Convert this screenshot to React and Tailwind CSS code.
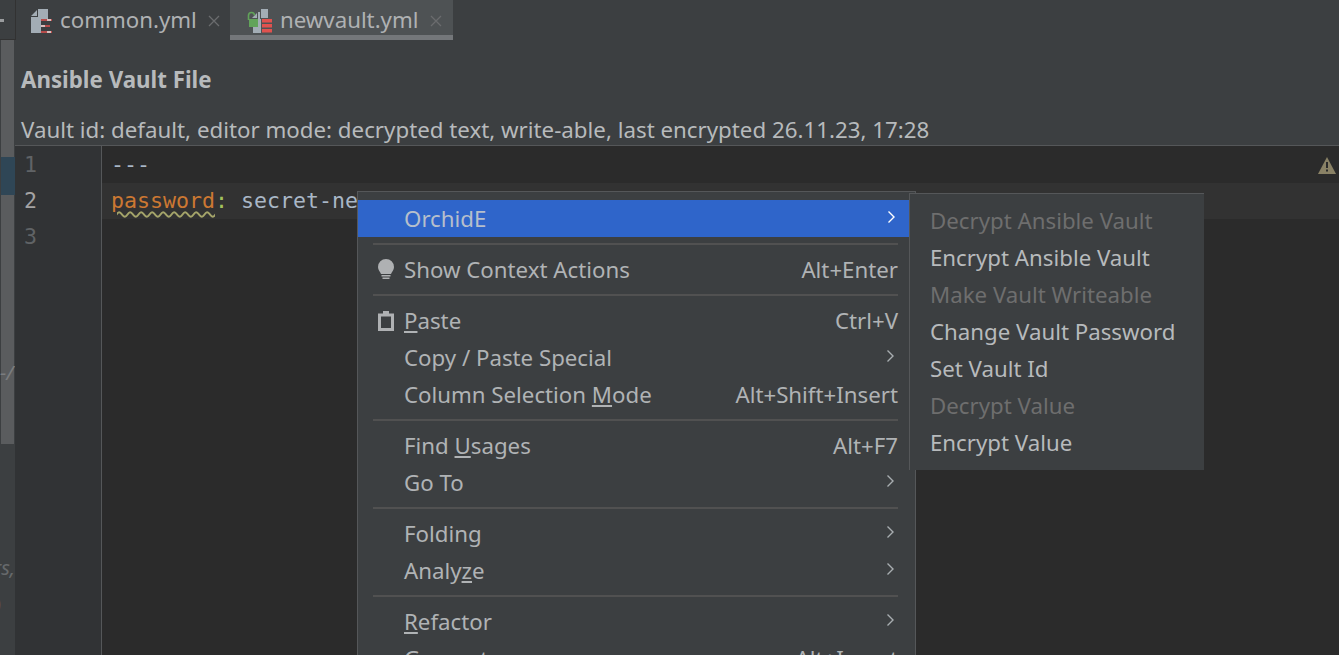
const menuGroups = [
  [{ label: 'OrchidE', arrow: true, active: true }],
  [{ label: 'Show Context Actions', shortcut: 'Alt+Enter', icon: 'bulb' }],
  [
    { label: <><u className="underline underline-offset-2">P</u>aste</>, shortcut: 'Ctrl+V', icon: 'clipboard' },
    { label: 'Copy / Paste Special', arrow: true },
    { label: <>Column Selection <u className="underline underline-offset-2">M</u>ode</>, shortcut: 'Alt+Shift+Insert' },
  ],
  [
    { label: <>Find <u className="underline underline-offset-2">U</u>sages</>, shortcut: 'Alt+F7' },
    { label: 'Go To', arrow: true },
  ],
  [
    { label: 'Folding', arrow: true },
    { label: <>Analy<u className="underline underline-offset-2">z</u>e</>, arrow: true },
  ],
  [
    { label: <><u className="underline underline-offset-2">R</u>efactor</>, arrow: true },
    { label: 'Generate', shortcut: 'Alt+Insert' },
  ],
]

const vaultItems = [
  { label: 'Decrypt Ansible Vault', disabled: true },
  { label: 'Encrypt Ansible Vault' },
  { label: 'Make Vault Writeable', disabled: true },
  { label: 'Change Vault Password' },
  { label: 'Set Vault Id' },
  { label: 'Decrypt Value', disabled: true },
  { label: 'Encrypt Value' },
]

function Chevron({ color = '#a8adb0' }) {
  return (
    <svg width="9" height="14" viewBox="0 0 9 14" fill="none" className="mb-1">
      <path d="M1.5 1.5 7 7l-5.5 5.5" stroke={color} strokeWidth="1.4" />
    </svg>
  )
}

function BulbIcon() {
  return (
    <svg width="16" height="22" viewBox="0 0 16 22" fill="#afb1b3">
      <path d="M8 0a8 8 0 0 1 8 8c0 3-2 4.500-3 7H3C2 12.500 0 11 0 8a8 8 0 0 1 8-8Z" />
      <path d="M3.500 16h9v1.500h-9zM4.500 18.500h7V20h-7z" />
    </svg>
  )
}

function ClipboardIcon() {
  return (
    <svg width="16" height="20" viewBox="0 0 16 20" fill="#afb1b3">
      <path fillRule="evenodd" d="M5 0h6v2.500h5V20H0V2.500h5V0ZM3 5.500V17h10V5.500H3Z" />
    </svg>
  )
}

function CloseX() {
  return (
    <svg width="12" height="12" viewBox="0 0 12 12" className="shrink-0">
      <path d="M1 1l10 10M11 1 1 11" stroke="#6a6c6e" strokeWidth="1.300" />
    </svg>
  )
}

function YamlIcon() {
  return (
    <svg width="24" height="24" viewBox="0 0 24 24" className="shrink-0">
      <path d="M0 7 6 1v6H0ZM0 8h7V0h10v10H10v14H0V8Z" fill="#a3adb5" />
      <path d="M10 11h11M10 17h9M10 23h11" stroke="#e0524f" strokeWidth="1.600" />
      <path d="M16 11h4M10 17h4M16 23h4" stroke="#e4e4e4" strokeWidth="1.600" />
    </svg>
  )
}

function VaultIcon() {
  return (
    <svg width="26" height="24" viewBox="0 0 26 24" className="shrink-0">
      <path d="M5 9 10 4v5H5ZM5 10h6V3h2v7h1v14H6V10H5Z" fill="#a3adb5" />
      <path d="M14 0h7v9h-7z" fill="#a3adb5" />
      <path d="M15 10h10v3.500H15zM15 15h10v3.500H15zM15 20h10v3.500H15z" fill="#e0524f" />
      <path d="M1.500 11V6.500a3 3 0 0 1 6 0" fill="none" stroke="#62a35a" strokeWidth="1.600" />
      <path d="M2 10h9v8H2z" fill="#62a35a" />
    </svg>
  )
}

function Tab({ name, icon, active }) {
  return (
    <div
      className={`flex h-[40px] items-center border-b-[5px] pt-[6px] ${
        active
          ? 'w-[223px] border-[#74777a] bg-[#4e5254] pl-[17px]'
          : 'w-[214px] border-transparent pl-[15px]'
      }`}
    >
      {icon}
      <span className={`${active ? 'ml-[7px]' : 'ml-[5px]'} text-[22.250px] leading-none text-[#afb1b3]`}>{name}</span>
      <span className="ml-[11px]">
        <CloseX />
      </span>
    </div>
  )
}

function MenuRow({ item }) {
  return (
    <div
      className={`flex h-[37px] items-center pr-[17px] ${
        item.active ? 'mr-[6px] bg-[#2f65ca] text-[#b6bfcc]' : 'text-[#b0b3b5]'
      }`}
    >
      <span className="flex w-[46px] shrink-0 justify-center pl-[9px]">
        {item.icon === 'bulb' && <BulbIcon />}
        {item.icon === 'clipboard' && <ClipboardIcon />}
      </span>
      <span className="flex-1 whitespace-nowrap">{item.label}</span>
      {item.shortcut && <span className="whitespace-nowrap">{item.shortcut}</span>}
      {item.arrow && (
        <span className={item.active ? 'mr-[-4px]' : 'mr-[3px]'}>
          <Chevron color={item.active ? '#ffffff' : '#a8adb0'} />
        </span>
      )}
    </div>
  )
}

function ContextMenu() {
  return (
    <div className="absolute left-[357px] top-[191px] w-[559px] border border-[#555759] bg-[#3c3f41] pt-[8px] text-[22.250px]">
      {menuGroups.map((group, i) => (
        <div key={i}>
          {i > 0 && <div className="mx-[15px] mr-[17px] mt-[6px] mb-[6px] h-[2px] bg-[#515151]" />}
          {group.map((item, j) => (
            <MenuRow key={j} item={item} />
          ))}
        </div>
      ))}
    </div>
  )
}

function VaultSubmenu() {
  return (
    <div className="absolute left-[909px] top-[193px] w-[295px] border-t border-l border-[#555759] bg-[#3c3f41] pt-[8px] pb-[9px] pl-[20px] text-[22.250px]">
      {vaultItems.map((item) => (
        <div
          key={item.label}
          className={`flex h-[37px] items-center whitespace-nowrap ${
            item.disabled ? 'text-[#6e6e6e]' : 'text-[#b7babc]'
          }`}
        >
          {item.label}
        </div>
      ))}
    </div>
  )
}

function App() {
  return (
    <div
      className="relative flex h-[655px] w-[1339px] overflow-hidden bg-[#2b2b2b]"
      style={{ fontFamily: '"Noto Sans", sans-serif' }}
    >
      <aside className="relative flex w-[15px] shrink-0 flex-col overflow-hidden bg-[#3c3f41]">
        <div className="h-[40px] border-b border-[#323232]">
          <div className="mt-[19px] h-[3px] w-[4px] bg-[#9a9c9e]" />
        </div>
        <div className="ml-[1px] flex h-[404px] w-[13px] flex-col bg-[#5a5c5e]">
          <div className="mt-[117px] h-[38px] w-[14px] bg-[#2f4656]" />
        </div>
        <span className="absolute left-[0px] top-[358px] text-[20px] italic text-[#7b7d7f]">-/</span>
        <span className="absolute right-[0px] top-[553px] text-[20px] italic text-[#66696b]">rs,</span>
        <span className="absolute left-[-5px] top-[588px] text-[20px] text-[#6b5a43]">)</span>
      </aside>

      <main className="flex min-w-0 flex-1 flex-col">
        <div className="flex h-[40px] shrink-0 border-l border-[#323232] bg-[#3c3f41]">
          <Tab name="common.yml" icon={<YamlIcon />} />
          <Tab name="newvault.yml" icon={<VaultIcon />} active />
        </div>

        <div className="flex h-[106px] shrink-0 flex-col border-b border-[#555759] bg-[#3c3f41] pl-[6px] text-[#b7babc]">
          <div className="mt-[26px] text-[22.300px] font-bold leading-[28px]">Ansible Vault File</div>
          <div className="mt-[22px] text-[22.300px] leading-[28px]">
            Vault id: default, editor mode: decrypted text, write-able, last encrypted 26.11.23, 17:28
          </div>
        </div>

        <div
          className="flex flex-1 text-[21.600px]"
          style={{ fontFamily: '"DejaVu Sans Mono", monospace' }}
        >
          <div className="w-[87px] shrink-0 border-r border-[#555759] bg-[#313335] pl-[9px] pt-[1px] leading-[36px] text-[#606366]">
            <div>1</div>
            <div className="text-[#a4a3a3]">2</div>
            <div>3</div>
          </div>
          <div className="relative flex-1 pt-[1px] leading-[36px] text-[#a9b7c6]">
            <div className="pl-[9px]">---</div>
            <div className="bg-[#323232] pl-[9px]">
              <span className="text-[#cc7832] underline decoration-wavy decoration-[#a5a56a] decoration-[1.500px] underline-offset-[3px]">password</span>
              <span className="text-[#a5c25c]">:</span> secret-new
            </div>
            <svg width="18" height="17" viewBox="0 0 18 17" className="absolute right-[3px] top-[11px]">
              <path d="M9 0 18 17H0L9 0Z" fill="#8a8266" />
              <path d="M8 5h2v6H8zM8 12.500h2v2H8z" fill="#2b2b2b" />
            </svg>
          </div>
        </div>
      </main>

      <ContextMenu />
      <VaultSubmenu />
    </div>
  )
}

export default App
